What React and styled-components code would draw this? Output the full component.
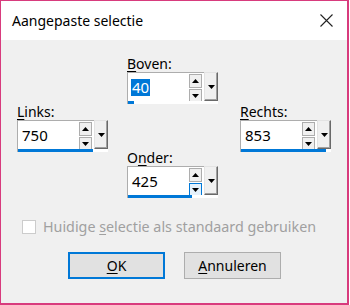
import styled, { createGlobalStyle } from 'styled-components';

const GlobalStyle = createGlobalStyle`
  html, body {
    margin: 0;
    padding: 0;
    background: #ffffff;
  }
  body {
    font-family: "Noto Sans", "Open Sans", sans-serif;
    color: #000;
  }
`;

const Window = styled.div`
  width: 349px;
  height: 305px;
  box-sizing: border-box;
  border: 1px solid #d83b7d;
  border-right-width: 2px;
  border-bottom-width: 2px;
  display: flex;
  flex-direction: column;
  background: #f0f0f0;
`;

const TitleBar = styled.div`
  height: 39px;
  flex: none;
  background: #ffffff;
  display: flex;
  align-items: center;
  justify-content: space-between;
  padding: 0 14px 0 11px;
  font-size: 14px;
`;

const CloseBtn = styled.div`
  width: 14px;
  height: 14px;
  display: flex;
  align-items: center;
  justify-content: center;
`;

const Body = styled.div`
  flex: 1;
  display: flex;
  flex-direction: column;
`;

const Fields = styled.div`
  display: flex;
  padding-left: 16px;
`;

const Column = styled.div`
  width: ${p => p.$width}px;
  margin-top: ${p => p.$top}px;
  display: flex;
  flex-direction: column;
  gap: ${p => p.$gap || 0}px;
`;

const Group = styled.div`
  display: flex;
  flex-direction: column;
`;

const Label = styled.div`
  font-size: 14px;
  line-height: 16px;
  color: #000;
  margin-bottom: 0;

  u {
    text-decoration: underline;
    text-underline-offset: 2px;
  }
`;

const Spin = styled.div`
  width: 91px;
  display: flex;
  flex-direction: column;
`;

const SpinRow = styled.div`
  display: flex;
  height: 29px;
`;

const ValueBox = styled.div`
  flex: 1;
  background: #ffffff;
  border: 1px solid #adadad;
  border-right: none;
  border-bottom: none;
  display: flex;
  align-items: center;
  padding-left: 3px;
  font-size: 15px;
`;

const Value = styled.span`
  padding: 0 1px;
  line-height: 17px;
  background: ${p => (p.$selected ? '#0078d7' : 'transparent')};
  color: ${p => (p.$selected ? '#ffffff' : '#000')};
`;

const Steppers = styled.div`
  margin-left: auto;
  margin-right: 2px;
  display: flex;
  flex-direction: column;
  align-self: flex-start;
  gap: 1px;
  padding-top: 1px;
`;

const Step = styled.div`
  width: 11px;
  height: 12px;
  border: 1px solid ${p => (p.$hover ? '#0078d7' : '#adadad')};
  background: ${p => (p.$hover ? '#e5f1fb' : '#f0f0f0')};
  display: flex;
  align-items: center;
  justify-content: center;
`;

const DropBtn = styled.div`
  width: 12px;
  background: #f0f0f0;
  border-top: 1px solid #e3e3e3;
  border-left: 1px solid #e3e3e3;
  border-right: 1px solid #696969;
  border-bottom: 1px solid #696969;
  box-shadow: inset -1px -1px 0 #a0a0a0;
  display: flex;
  align-items: center;
  justify-content: center;
`;

const BarTrack = styled.div`
  height: 3px;
  background: #ffffff;
  border-left: 1px solid #adadad;
`;

const Bar = styled.div`
  height: 3px;
  background: #0078d7;
`;

const CheckRow = styled.div`
  display: flex;
  align-items: center;
  gap: 7px;
  margin-top: 20px;
  padding-left: 21px;
  font-size: 14.3px;
  line-height: 17px;
  color: #a0a0a0;

  u {
    text-underline-offset: 2px;
  }
`;

const CheckBox = styled.div`
  width: 12px;
  height: 12px;
  border: 1px solid #cccccc;
  background: #ffffff;
`;

const ButtonRow = styled.div`
  display: flex;
  gap: 19px;
  margin-top: 17px;
  padding-left: 67px;
`;

const Button = styled.div`
  width: 97px;
  height: 27px;
  box-sizing: border-box;
  background: #e1e1e1;
  border: ${p => (p.$default ? '2px solid #0078d7' : '1px solid #adadad')};
  display: flex;
  align-items: center;
  justify-content: center;
  font-size: 14px;

  u {
    text-underline-offset: 2px;
  }
`;

const Tri = ({ down }) => (
  <svg width="7" height="4" viewBox="0 0 7 4">
    <path d={down ? 'M0 0H7L3.5 4Z' : 'M0 4H7L3.5 0Z'} fill="#000" />
  </svg>
);

function SpinField({ label, value, max, selected, hoverDown }) {
  return (
    <Group>
      <Label>{label}</Label>
      <Spin>
        <SpinRow>
          <ValueBox>
            <Value $selected={selected}>{value}</Value>
            <Steppers>
              <Step><Tri /></Step>
              <Step $hover={hoverDown}><Tri down /></Step>
            </Steppers>
          </ValueBox>
          <DropBtn><Tri down /></DropBtn>
        </SpinRow>
        <BarTrack>
          <Bar style={{ width: `${Math.max(4, (value / max) * 90)}px` }} />
        </BarTrack>
      </Spin>
    </Group>
  );
}

export default function App() {
  return (
    <>
      <GlobalStyle />
      <Window>
        <TitleBar>
          <span>Aangepaste selectie</span>
          <CloseBtn>
            <svg width="13" height="13" viewBox="0 0 13 13">
              <path d="M0.5 0.5L12.5 12.5M12.5 0.5L0.5 12.5" stroke="#222" strokeWidth="1.1" />
            </svg>
          </CloseBtn>
        </TitleBar>
        <Body>
          <Fields>
            <Column $width={110} $top={64}>
              <SpinField label={<><u>L</u>inks:</>} value={750} max={900} />
            </Column>
            <Column $width={113} $top={16} $gap={46}>
              <SpinField label={<><u>B</u>oven:</>} value={40} max={600} selected />
              <SpinField label={<>O<u>n</u>der:</>} value={425} max={600} hoverDown />
            </Column>
            <Column $width={100} $top={64}>
              <SpinField label={<><u>R</u>echts:</>} value={853} max={900} />
            </Column>
          </Fields>
          <CheckRow>
            <CheckBox />
            <span>Huidige <u>s</u>electie als standaard gebruiken</span>
          </CheckRow>
          <ButtonRow>
            <Button $default><span><u>O</u>K</span></Button>
            <Button><span><u>A</u>nnuleren</span></Button>
          </ButtonRow>
        </Body>
      </Window>
    </>
  );
}
